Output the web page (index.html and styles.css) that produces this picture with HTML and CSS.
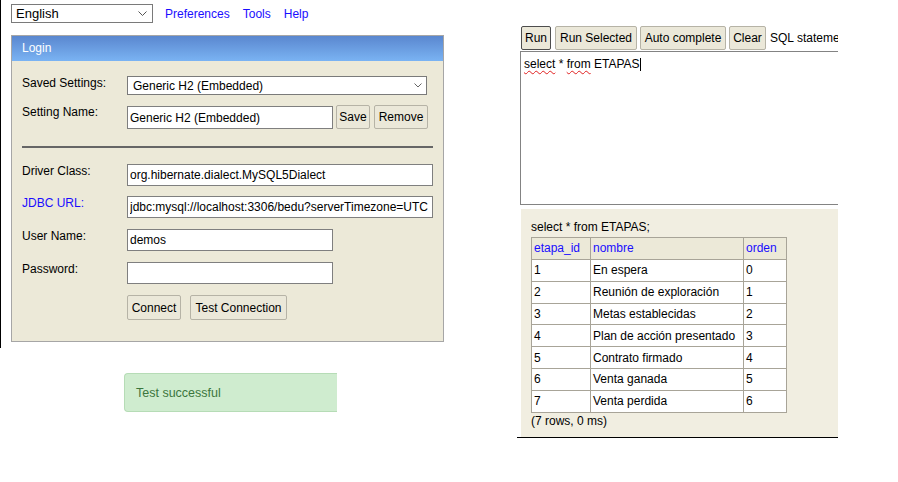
FILE: index.html
```html
<!DOCTYPE html>
<html>
<head>
<meta charset="utf-8">
<title>H2 Console</title>
<link rel="stylesheet" href="styles.css">
</head>
<body>
<div class="page">
  <div class="left">
    <div class="frame">
      <div class="topbar">
        <div class="select select-lang">
          <span>English</span>
          <svg class="chev" width="9" height="5" viewBox="0 0 9 5"><polyline points="0.5,0.5 4.5,4.5 8.5,0.5" fill="none" stroke="#555" stroke-width="1"/></svg>
        </div>
        <nav class="links">
          <a href="#">Preferences</a>
          <a href="#">Tools</a>
          <a href="#">Help</a>
        </nav>
      </div>
      <div class="login">
        <div class="login-head">Login</div>
        <div class="login-body">
          <div class="row r-saved">
            <label class="lbl">Saved Settings:</label>
            <div class="select select-saved">
              <span>Generic H2 (Embedded)</span>
              <svg class="chev" width="8" height="5" viewBox="0 0 8 5"><polyline points="0.5,0.5 4,4 7.5,0.5" fill="none" stroke="#666" stroke-width="1"/></svg>
            </div>
          </div>
          <div class="row r-name">
            <label class="lbl">Setting Name:</label>
            <input class="inp inp-name" type="text" value="Generic H2 (Embedded)">
            <button class="btn b-save">Save</button>
            <button class="btn b-remove">Remove</button>
          </div>
          <hr class="sep">
          <div class="row r-driver">
            <label class="lbl">Driver Class:</label>
            <input class="inp inp-wide" type="text" value="org.hibernate.dialect.MySQL5Dialect">
          </div>
          <div class="row r-url">
            <label class="lbl lbl-link">JDBC URL:</label>
            <input class="inp inp-wide" type="text" value="jdbc:mysql://localhost:3306/bedu?serverTimezone=UTC">
          </div>
          <div class="row r-user">
            <label class="lbl">User Name:</label>
            <input class="inp inp-short" type="text" value="demos">
          </div>
          <div class="row r-pass">
            <label class="lbl">Password:</label>
            <input class="inp inp-short" type="password" value="">
          </div>
          <div class="row r-btns">
            <span class="lbl"></span>
            <button class="btn b-connect">Connect</button>
            <button class="btn b-test">Test Connection</button>
          </div>
        </div>
      </div>
    </div>
    <div class="alert">Test successful</div>
  </div>

  <div class="right">
    <div class="toolbar">
      <button class="btn tb b-run">Run</button>
      <button class="btn tb b-runsel">Run Selected</button>
      <button class="btn tb b-auto">Auto complete</button>
      <button class="btn tb b-clear">Clear</button>
      <span class="tb-label">SQL statement:</span>
    </div>
    <div class="sql"><span class="sp">select</span> * <span class="sp">from</span> ETAPAS<span class="caret"></span></div>
    <div class="results">
      <div class="res">
        <div class="res-title">select * from ETAPAS;</div>
        <table class="tbl">
          <colgroup><col class="c1"><col class="c2"><col class="c3"></colgroup>
          <thead>
            <tr><th>etapa_id</th><th>nombre</th><th>orden</th></tr>
          </thead>
          <tbody>
            <tr><td>1</td><td>En espera</td><td>0</td></tr>
            <tr><td>2</td><td>Reunión de exploración</td><td>1</td></tr>
            <tr><td>3</td><td>Metas establecidas</td><td>2</td></tr>
            <tr><td>4</td><td>Plan de acción presentado</td><td>3</td></tr>
            <tr><td>5</td><td>Contrato firmado</td><td>4</td></tr>
            <tr><td>6</td><td>Venta ganada</td><td>5</td></tr>
            <tr><td>7</td><td>Venta perdida</td><td>6</td></tr>
          </tbody>
        </table>
        <div class="res-foot">(7 rows, 0 ms)</div>
      </div>
    </div>
  </div>
</div>
</body>
</html>
```

FILE: styles.css
```css
* { box-sizing: border-box; }

html, body {
  margin: 0;
  padding: 0;
  background: #fff;
}

body {
  font-family: "Liberation Sans", Arial, sans-serif;
  font-size: 12px;
  color: #000;
}

.page {
  display: flex;
  align-items: flex-start;
}

/* ---------- left frame ---------- */
.left {
  width: 517px;
  flex: none;
}

.frame {
  border-left: 1px solid #000;
  height: 348px;
  padding: 4px 0 0 10px;
}

.topbar {
  display: flex;
  align-items: center;
  height: 19px;
}

.select {
  display: flex;
  align-items: center;
  justify-content: space-between;
  background: #fff;
  border: 1px solid #7a7a7a;
  white-space: nowrap;
}

.select-lang {
  width: 142px;
  height: 19px;
  padding: 0 5px 0 4px;
  font-size: 13px;
}

.links {
  display: flex;
  gap: 13px;
  margin-left: 12px;
}

.links a {
  color: #1a0dff;
  text-decoration: none;
}

.login {
  margin-top: 12px;
  width: 433px;
  border: 1px solid #a6a6a6;
  background: #ece9d8;
}

.login-head {
  height: 25px;
  line-height: 25px;
  padding-left: 10px;
  color: #fff;
  background: linear-gradient(#5a87cf, #7ab3f3);
}

.login-body {
  padding: 15px 10px 21px;
}

.row {
  display: flex;
  align-items: flex-start;
}

.row > * { flex: none; }

.lbl {
  width: 105px;
  flex: none;
  line-height: 14px;
}

.lbl-link {
  color: #1a0dff;
}

.select-saved {
  width: 300px;
  height: 19px;
  padding: 0 4px 0 5px;
}

.r-name { margin-top: 10px; }
.r-driver { margin-top: 16px; }
.r-url { margin-top: 10px; }
.r-user, .r-pass, .r-btns { margin-top: 11px; }

.inp {
  height: 22px;
  border: 1px solid #7f7f7f;
  padding: 0 2px;
  margin: 0;
  font: 12px "Liberation Sans", Arial, sans-serif;
  color: #000;
  background: #fff;
  outline: none;
}

.inp-name {
  width: 206px;
  height: 23px;
  margin-top: 1px;
}

.inp-wide { width: 306px; }
.inp-short { width: 206px; }

.sep {
  margin: 17px 0 0;
  height: 2px;
  border: 0;
  background: #666;
}

.btn {
  font: 12px "Liberation Sans", Arial, sans-serif;
  color: #000;
  background: #ebe8d9;
  border: 1px solid #b6b3a6;
  border-radius: 2px;
  padding: 0;
  margin: 0;
  height: 24px;
  text-align: center;
  white-space: nowrap;
  flex: none;
}

.b-save { width: 34px; margin-left: 3px; }
.b-remove { width: 54px; margin-left: 4px; }

.b-connect { width: 54px; height: 25px; }
.b-test { width: 97px; height: 25px; margin-left: 9px; }

.alert {
  margin: 25px 0 0 124px;
  width: 213px;
  height: 39px;
  display: flex;
  align-items: center;
  padding-left: 11px;
  background: #cfeccf;
  border: 1px solid #b6dcb6;
  border-right: 0;
  border-radius: 4px 0 0 4px;
  color: #3c763d;
  font-size: 12.5px;
}

/* ---------- right frame ---------- */
.right {
  width: 321px;
  flex: none;
  overflow: hidden;
  padding-top: 26px;
}

.toolbar {
  display: flex;
  align-items: center;
  height: 24px;
  padding-left: 4px;
  white-space: nowrap;
}

.b-run { width: 30px; border-color: #4d4d4d; }
.b-runsel { width: 82px; margin-left: 4px; }
.b-auto { width: 86px; margin-left: 3px; }
.b-clear { width: 37px; margin-left: 3px; }

.tb-label {
  flex: none;
  margin-left: 4px;
}

.sql {
  margin: 1px 0 0 3px;
  width: 340px;
  height: 154px;
  border: 1px solid #838383;
  padding: 5px 3px;
  line-height: 14px;
  white-space: nowrap;
  background: #fff;
}

.sp {
  text-decoration: underline wavy #e02020;
  text-decoration-thickness: 1px;
  text-underline-offset: 2px;
}

.caret {
  display: inline-block;
  width: 1px;
  height: 13px;
  background: #000;
  vertical-align: -3px;
}

.results {
  margin-top: 4px;
  padding-left: 4px;
  border-bottom: 1px solid #000;
}

.res {
  height: 228px;
  background: #f1eee1;
  padding: 11px 0 0 10px;
}

.res-title {
  line-height: 14px;
  margin-bottom: 3px;
}

.tbl {
  border-collapse: collapse;
  table-layout: fixed;
  width: 255px;
}

.c1 { width: 59px; }
.c2 { width: 153px; }
.c3 { width: 43px; }

.tbl th,
.tbl td {
  border: 1px solid #a8a498;
  height: 21.85px;
  padding: 0 2px;
  line-height: 14px;
  text-align: left;
  font-weight: normal;
  white-space: nowrap;
  vertical-align: middle;
}

.tbl th {
  background: #ece9d8;
  color: #1a0dff;
}

.tbl td {
  background: #fff;
}

.res-foot {
  line-height: 14px;
  margin-top: 1px;
}
```
